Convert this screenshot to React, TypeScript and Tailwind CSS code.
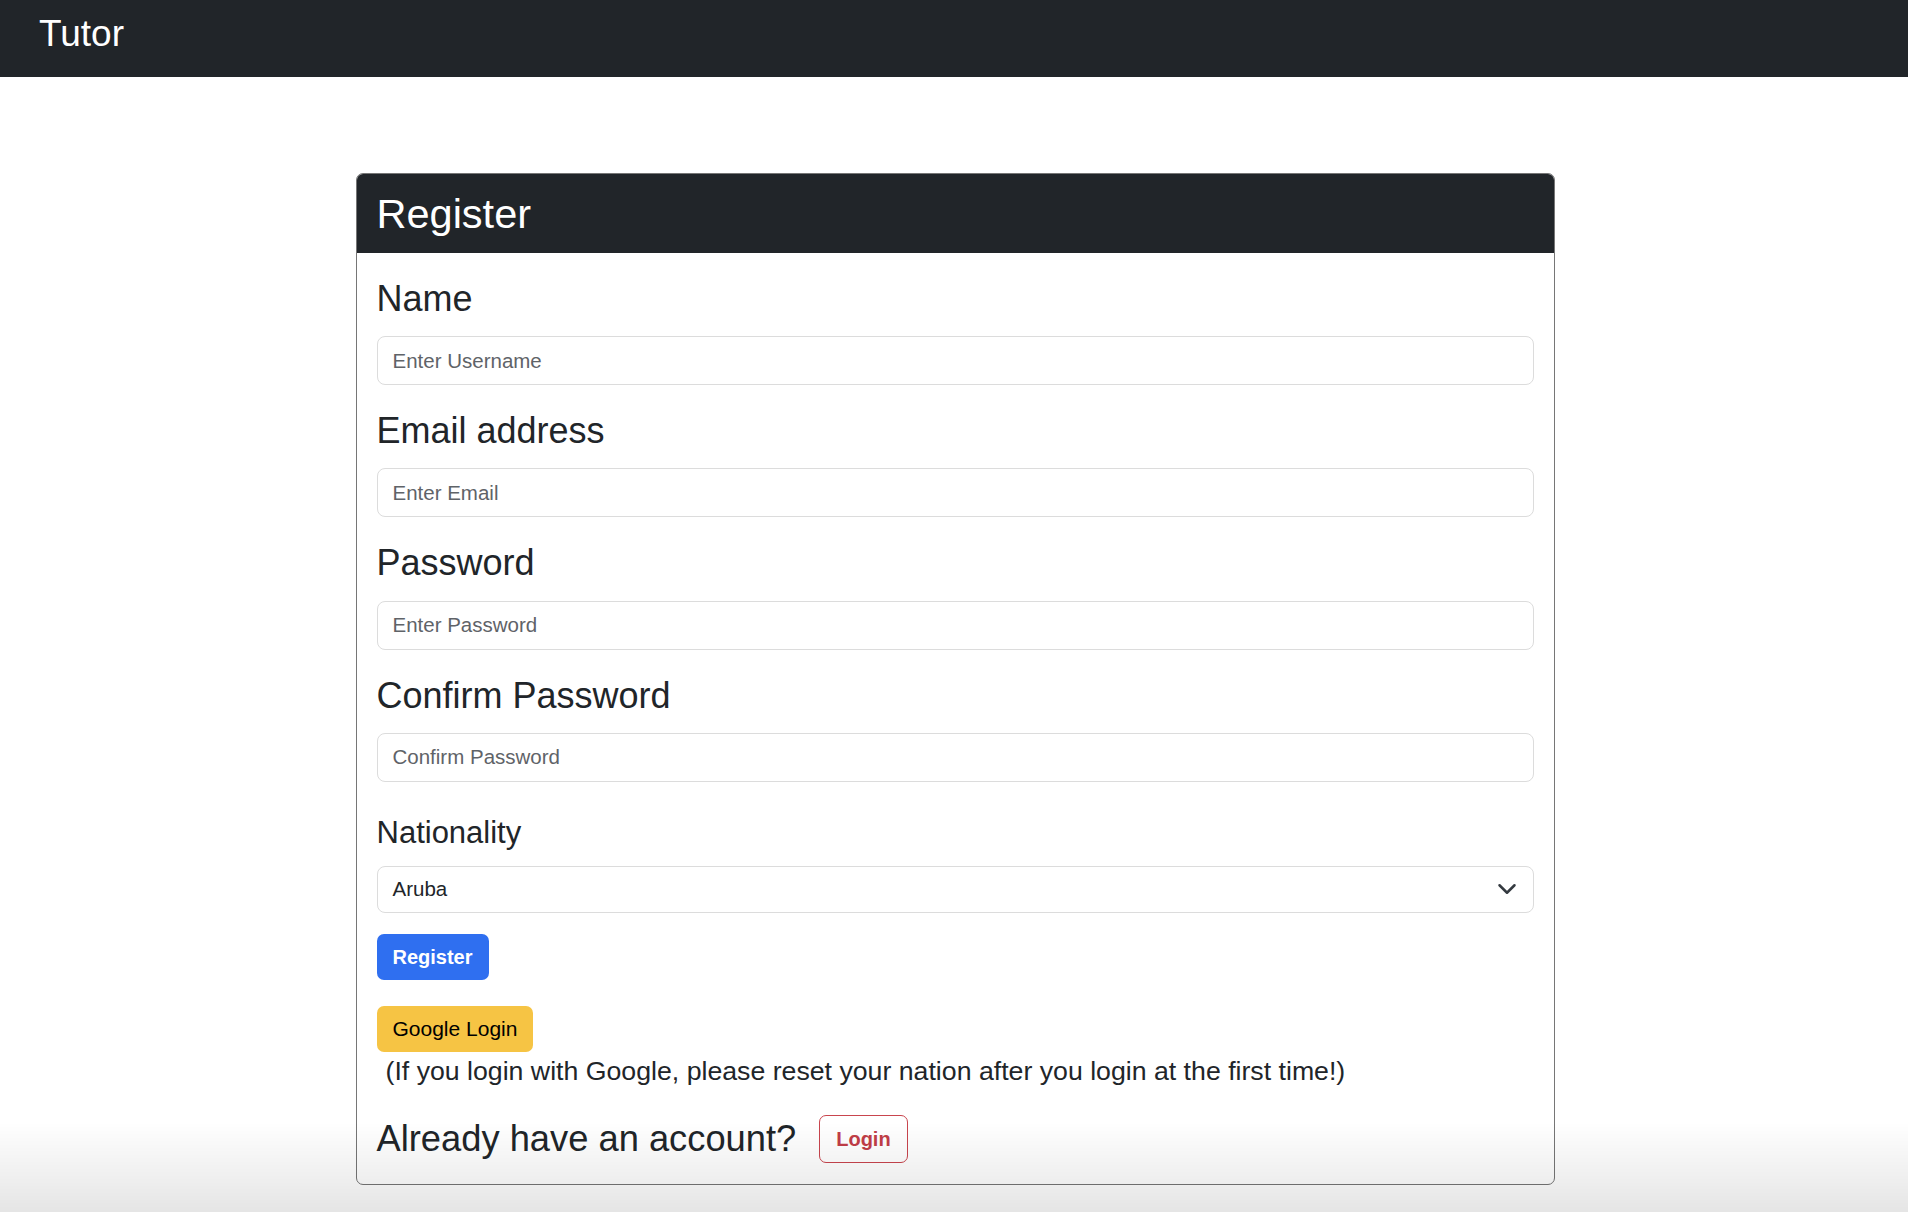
import React from "react";

const fields = [
  { label: "Name", placeholder: "Enter Username", type: "text" },
  { label: "Email address", placeholder: "Enter Email", type: "email" },
  { label: "Password", placeholder: "Enter Password", type: "password" },
  { label: "Confirm Password", placeholder: "Confirm Password", type: "password" },
];

const App = () => {
  return (
    <div className="min-h-screen bg-white text-[#212529] font-['Liberation_Sans',Arial,sans-serif]">
      <nav className="h-[77px] bg-[#212529] px-[39px] pt-[15px]">
        <span className="text-white text-[37px] leading-none">Tutor</span>
      </nav>

      <main className="pt-[96px] pl-[2px]">
        <div className="mx-auto w-[1199px] border border-[#767676] rounded-[7px] overflow-hidden">
          <div className="h-[79px] bg-[#212529] px-[20px] flex items-center">
            <h2 className="text-white text-[41.5px] leading-[1.2]">Register</h2>
          </div>

          <form className="px-[20px] pt-[24px] pb-[21px]" onSubmit={(e) => e.preventDefault()}>
            {fields.map((f) => (
              <div key={f.label} className="mb-[24px]">
                <label className="block text-[36px] leading-[1.2] mb-[16px]">{f.label}</label>
                <input
                  type={f.type}
                  placeholder={f.placeholder}
                  className="block w-full h-[49px] px-[15px] text-[20.5px] border border-[#dcdcdc] rounded-[8px] outline-none placeholder:text-[#5f6368]"
                />
              </div>
            ))}

            <label className="block mt-[32px] text-[31px] leading-[1.2] mb-[15px]">Nationality</label>
            <div className="flex items-center justify-between h-[47px] pl-[15px] pr-[16px] border border-[#dcdcdc] rounded-[8px] text-[20.5px]">
              <span>Aruba</span>
              <svg width="20" height="20" viewBox="0 0 16 16" fill="none">
                <path d="m2 5 6 6 6-6" stroke="#343a40" strokeWidth="2" strokeLinecap="round" strokeLinejoin="round" />
              </svg>
            </div>

            <button className="mt-[21px] h-[46px] px-[16px] rounded-[7px] bg-[#2f6ff0] text-white font-bold text-[20px]">
              Register
            </button>

            <div className="mt-[26px]">
              <button type="button" className="h-[46px] px-[16px] rounded-[7px] bg-[#f6c444] text-black text-[21px]">
                Google Login
              </button>
            </div>
            <p className="pl-[9px] text-[26.7px] leading-[1.45]">
              (If you login with Google, please reset your nation after you login at the first time!)
            </p>

            <div className="mt-[24px] flex items-center">
              <span className="text-[36.3px] leading-[1.2]">Already have an account?</span>
              <button type="button" className="ml-[23px] h-[48px] px-[16px] rounded-[7px] border-[1.5px] border-[#c9454e] text-[#c23e48] font-bold text-[20px]">
                Login
              </button>
            </div>
          </form>
        </div>
      </main>

      <div className="pointer-events-none fixed left-0 right-0 bottom-0 h-[90px] bg-gradient-to-b from-transparent to-[rgba(0,0,0,0.1)]" />
    </div>
  );
};

export default App;
